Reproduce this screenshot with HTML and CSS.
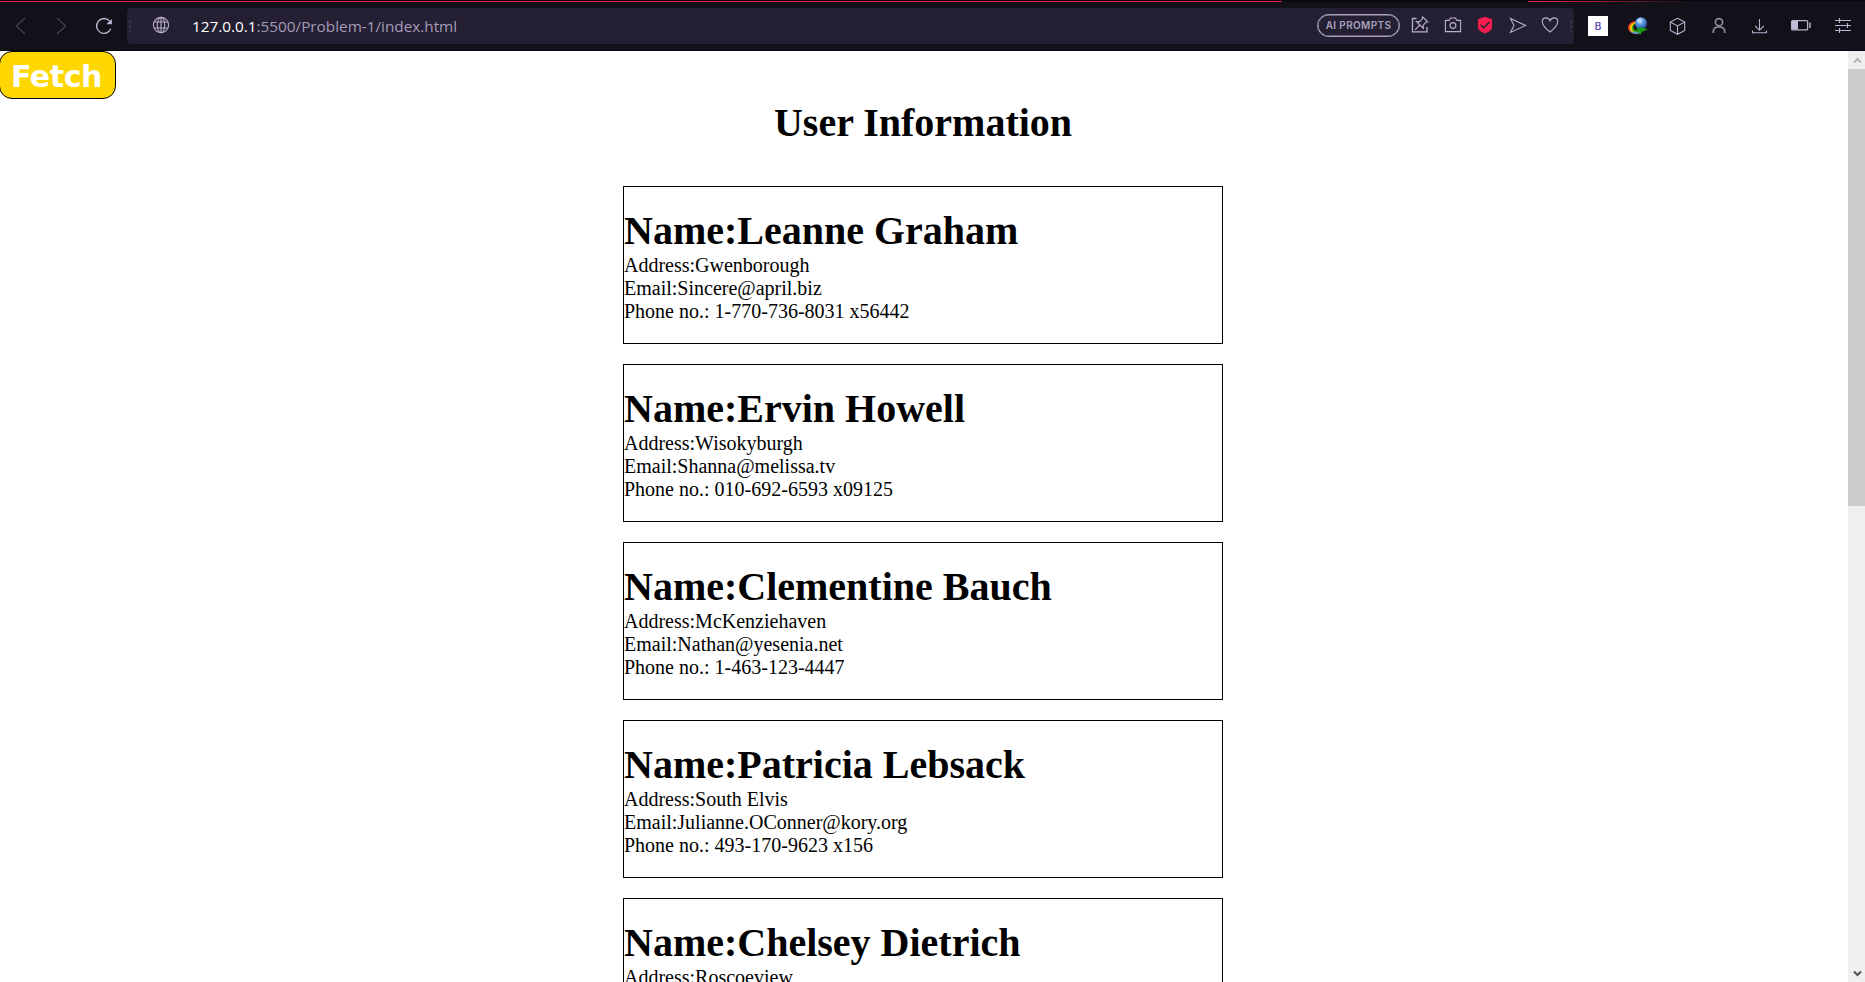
FILE: index.html
```html
<!DOCTYPE html>
<html lang="en">
<head>
<meta charset="utf-8">
<title>User Information</title>
<link rel="stylesheet" href="styles.css">
</head>
<body>
<header class="toolbar">
  <div class="tabline"><i class="tabline-left"></i><i class="tabline-right"></i></div>
  <nav class="nav">
    <svg class="dim" viewBox="0 0 20 20"><path d="M15 2 6.3 10 15 18"/></svg>
    <svg class="dim" viewBox="0 0 20 20"><path d="M5 2 13.7 10 5 18"/></svg>
    <svg viewBox="0 0 20 20"><path d="M15.5 5A7.4 7.4 0 1 0 16.8 12.8" stroke-width="1.4"/><path d="M17.8 3v5.2h-5.4z" fill="#c3bbd8" stroke="none"/></svg>
  </nav>
  <div class="address">
    <span class="dots"></span>
    <svg class="globe" viewBox="0 0 20 20"><circle cx="10" cy="10" r="7.6"/><ellipse cx="10" cy="10" rx="3.7" ry="7.6"/><path d="M10 2.4v15.2M3.4 7h13.2M3.4 13h13.2"/></svg>
    <span class="url"><b>127.0.0.1</b>:5500/Problem-1/index.html</span>
    <span class="prompts">AI PROMPTS</span>
    <div class="actions">
      <svg viewBox="0 0 20 20"><path d="M6.500 3.500H2.500v13.300h14.500V12" stroke-width="1.300"/><path d="m12.600 1.800 5.200 5.200-1.900.3-2.700 2.800.1 3.300-6.900-6.900 3.300.1L12.300 3.800zM9.800 10 5 14.800"/></svg>
      <svg viewBox="0 0 20 20"><path d="M2.4 5.4h3.8L7.5 3h5l1.3 2.4h3.8v11.2H2.4z"/><circle cx="10" cy="10.5" r="2.9"/></svg>
      <svg viewBox="0 0 20 20"><path d="m10 1.800 7 2.500v8.200c0 2.400-3.100 4.200-7 6-3.900-1.800-7-3.600-7-6V4.300z" fill="#fa1e4e" stroke="none"/><path d="m5.600 9.800 3 3L14.500 7" stroke="#241f32" stroke-width="1.500"/></svg>
      <svg viewBox="0 0 20 20"><path d="m2.500 3.400 15 7-15 7L6 10.400z"/></svg>
      <svg viewBox="0 0 20 20"><path d="M10 17C5 13 2.300 10.300 2.300 6.700c0-2.200 1.600-3.800 3.700-3.800 1.800 0 3.200 1 4 2.900.8-1.900 2.200-2.900 4-2.900 2.100 0 3.700 1.600 3.700 3.800 0 3.600-2.700 6.300-7.700 10.300z"/></svg>
    </div>
    <span class="dots"></span>
  </div>
  <div class="extensions">
    <span class="badge">B</span>
    <svg viewBox="0 0 20 20">
      <defs><radialGradient id="ball" cx=".4" cy=".3" r=".75"><stop offset="0" stop-color="#e8f7ff"/><stop offset=".4" stop-color="#5d9be0"/><stop offset="1" stop-color="#1c469e"/></radialGradient></defs>
      <g stroke="none"><ellipse cx="7.500" cy="11.500" rx="7.500" ry="6.500" fill="#e83d1d"/><ellipse cx="8.400" cy="12" rx="6.800" ry="5.700" fill="#ffc800"/><ellipse cx="9.200" cy="12" rx="5.500" ry="4.700" fill="#3ba81f"/><ellipse cx="9" cy="11" rx="3.500" ry="3.500" fill="#151019"/><path d="M1 14q3 4 9 4l1-2q-6 1-10-2z" fill="#459ee8"/></g>
      <circle cx="13" cy="7.200" r="6" fill="url(#ball)" stroke="none"/><path d="m8 11.500 4 1 1-1.500 7 2.500-5.500 2L12 19z" fill="#159c13" stroke="none"/>
    </svg>
    <svg viewBox="0 0 20 20"><path d="m9.500 2.300 7.200 3.800v8.300l-7.200 3.900-7.200-3.900V6.100zM2.300 6.100l7.200 3.800 7.200-3.800M9.500 9.900v8.400"/></svg>
    <svg viewBox="0 0 20 20"><g stroke="#8f8a9e" stroke-width="1.700"><circle cx="10" cy="6.200" r="3.600"/><path d="M4.300 17v-1.500C4.300 12.300 7 11 10 11s5.700 1.300 5.700 4.500V17"/></g></svg>
    <svg viewBox="0 0 20 20"><path d="M9.500 3v11M5.200 10l4.300 4.300 4.300-4.300M2.500 14.500v2.300h14v-2.300"/></svg>
    <svg viewBox="0 0 22 20"><rect x="1.600" y="4.600" width="16" height="9.300" rx="1" stroke-width="1.300"/><path d="M2 5h6v8.500H2z" fill="#c3bbd8" stroke="none"/><path d="M20 6.500v5.500" stroke-width="1.500"/></svg>
    <svg viewBox="0 0 20 20"><path d="M2 4.500h16M2 9.500h16M2 14.500h16M6.500 2v5M14.500 7v5M6.500 12v5"/></svg>
  </div>
</header>
<div class="viewport">
  <main class="page">
    <button class="fetch">Fetch</button>
    <h1 class="title">User Information</h1>
    <section class="cards">
      <article class="card"><h1>Name:Leanne Graham</h1><p>Address:Gwenborough</p><p>Email:Sincere@april.biz</p><p>Phone no.: 1-770-736-8031 x56442</p></article>
      <article class="card"><h1>Name:Ervin Howell</h1><p>Address:Wisokyburgh</p><p>Email:Shanna@melissa.tv</p><p>Phone no.: 010-692-6593 x09125</p></article>
      <article class="card"><h1>Name:Clementine Bauch</h1><p>Address:McKenziehaven</p><p>Email:Nathan@yesenia.net</p><p>Phone no.: 1-463-123-4447</p></article>
      <article class="card"><h1>Name:Patricia Lebsack</h1><p>Address:South Elvis</p><p>Email:Julianne.OConner@kory.org</p><p>Phone no.: 493-170-9623 x156</p></article>
      <article class="card"><h1>Name:Chelsey Dietrich</h1><p>Address:Roscoeview</p></article>
    </section>
  </main>
  <aside class="scrollbar">
    <svg class="up" viewBox="0 0 17 18"><path d="M6 11.500 9.500 8l3.500 3.500"/></svg>
    <div class="thumb"></div>
    <svg class="down" viewBox="0 0 17 18"><path d="M6 7.500 9.500 11 13 7.500"/></svg>
  </aside>
</div>
</body>
</html>
```
FILE: styles.css
```css
* { box-sizing: border-box; }
body {
  margin: 0;
  height: 982px;
  overflow: hidden;
  display: flex;
  flex-direction: column;
  background: #fff;
  font-family: "Liberation Serif", serif;
}
svg {
  display: block;
  width: 20px;
  height: 20px;
  fill: none;
  stroke: #b9b1ce;
  stroke-width: 1.1;
}

/* Browser toolbar */
.toolbar {
  position: relative;
  flex: none;
  display: flex;
  height: 51px;
  padding-top: 8px;
  background: #121019;
  border-bottom: 1px solid #08070c;
}
.tabline {
  position: absolute;
  top: 0;
  left: 0;
  width: 100%;
  height: 2px;
  display: flex;
  justify-content: space-between;
  background: #09080d;
}
.tabline i { height: 1px; margin-top: 1px; }
.tabline-left { width: 1282px; background: #ee204f; }
.tabline-right { width: 337px; background: linear-gradient(90deg, #ee204f 0, #b01b40 60px, #121019 165px); }
.nav {
  display: flex;
  gap: 22px;
  width: 127px;
  padding: 8px 0 0 10px;
}
.nav svg { flex: none; }
.nav .dim { stroke: #494356; }
.address {
  flex: none;
  display: flex;
  align-items: center;
  width: 1447px;
  height: 36px;
  padding: 0 2px;
  border-radius: 4px;
  background: #241f32;
}
.dots {
  width: 2px;
  height: 13px;
  background: repeating-linear-gradient(#383248 0 3px, transparent 3px 5px);
}
.globe { margin: -2px 21px 0 20px; }
.url {
  flex: 1;
  font: 15.3px/22px "Open Sans", sans-serif;
  color: #a49cb9;
}
.url b { font-weight: 400; color: #fff; }
.prompts {
  width: 83px;
  height: 23px;
  margin: -2px 4px 0 0;
  border: 1px solid #a9a1be;
  box-shadow: inset 0 0 0 .5px #a9a1be;
  border-radius: 12px;
  font: 600 10px/21px Inter, sans-serif;
  letter-spacing: .35px;
  text-align: center;
  color: #aaa2bf;
}
.actions {
  display: grid;
  grid-template-columns: repeat(5, 32.5px);
  justify-items: center;
  width: 166px;
  margin-top: -2px;
}
.extensions {
  display: grid;
  grid-template-columns: 40px 40px 40px 42px 40px 42px 42px;
  justify-items: center;
  padding: 8px 0 0 4px;
}
.extensions svg:nth-child(6) { width: 22px; }
.badge {
  width: 20px;
  height: 20px;
  background: #fff;
  font: 600 10px/20px Inter, sans-serif;
  text-align: center;
  color: #5b55bd;
}

/* Page */
.viewport { flex: 1; display: flex; min-height: 0; }
.page { flex: 1; overflow: hidden; padding-right: 2px; }
.fetch {
  display: block;
  width: 117px;
  height: 48px;
  margin-left: -1px;
  padding: 3px 2px 0 0;
  border: 1px solid #000;
  border-radius: 13px;
  background: #ffd700;
  color: #fff;
  font: bold 30px/43px "DejaVu Sans", sans-serif;
  letter-spacing: -.4px;
}
.title {
  margin: 1px 0 40px;
  font-size: 40px;
  line-height: 46px;
  text-align: center;
}
.cards {
  display: flex;
  flex-direction: column;
  gap: 20px;
  width: 600px;
  margin: 0 auto;
}
.card {
  height: 158px;
  padding: 21px 0 20px;
  border: 1px solid #000;
}
.card h1 { margin: 0; font-size: 40px; line-height: 46px; }
.card p { margin: 0; font-size: 20px; line-height: 23px; }

.scrollbar {
  display: flex;
  flex-direction: column;
  width: 17px;
  background: #efefef;
}
.scrollbar svg { width: 17px; height: 18px; stroke-width: 2; }
.scrollbar .up { stroke: #b3b3b3; }
.scrollbar .down { margin-top: auto; stroke: #505050; }
.thumb { height: 437px; background: #cdcdcd; }
```
